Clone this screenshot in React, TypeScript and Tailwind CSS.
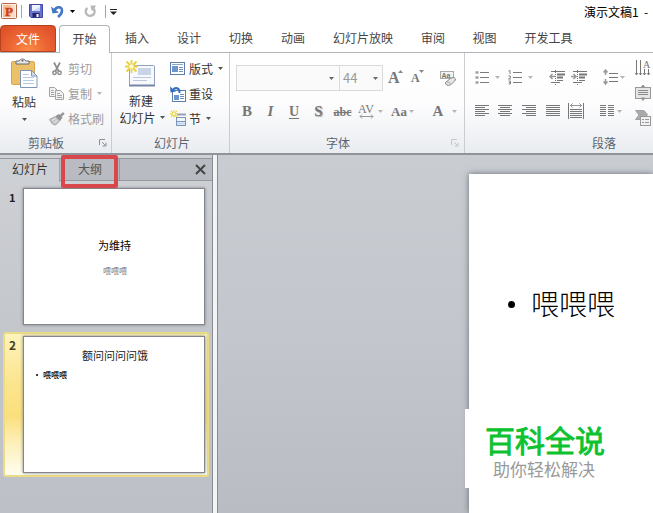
import React from 'react';

const tabs = [
  { name: '插入', width: 'w-[52px]' },
  { name: '设计', width: 'w-[52px]' },
  { name: '切换', width: 'w-[52px]' },
  { name: '动画', width: 'w-[52px]' },
  { name: '幻灯片放映', width: 'w-[88px]' },
  { name: '审阅', width: 'w-[52px]' },
  { name: '视图', width: 'w-[51px]' },
  { name: '开发工具', width: 'w-[77px]' },
];

function Arrow({ className = 'text-[#555]' }: { className?: string }) {
  return (
    <svg width="5" height="3" viewBox="0 0 5 3" className={`shrink-0 ${className}`}>
      <path d="M0 0H5L2.5 3Z" fill="currentColor" />
    </svg>
  );
}

function Launcher({ className = 'text-[#8a8f98]' }: { className?: string }) {
  return (
    <svg width="8" height="8" viewBox="0 0 8 8" fill="none" stroke="currentColor" className={className}>
      <path d="M0.5 6V0.5H6M3 3L6.5 6.5M7 3.5V7H3.5" />
    </svg>
  );
}

function Divider() {
  return <span className="w-px h-[16px] bg-[#c9ccd1] shrink-0"></span>;
}

function LogoIcon() {
  return (
    <svg width="16" height="16" viewBox="0 0 16 16">
      <rect x="0.5" y="0.5" width="15" height="15" rx="1" fill="#fdeee5" stroke="#b5654f" />
      <rect x="2" y="2" width="12" height="12" fill="#fbdcc6" />
      <path d="M2 2H9Q12.500 5 12 9L9 14H2Z" fill="#f6bd97" />
      <text x="4" y="13" fontSize="13" fontWeight="bold" fontFamily="Liberation Serif" fill="#c8401a" stroke="#c8401a" strokeWidth="0.4">P</text>
    </svg>
  );
}

function SaveIcon() {
  return (
    <svg width="14" height="14" viewBox="0 0 14 14">
      <path d="M0.500 0.500H13.500V13.500H2L0.500 12Z" fill="#6a72cc" stroke="#4147a4" />
      <rect x="3" y="1" width="8" height="6" fill="#eef3fd" />
      <path d="M3 7L11 3V7H3Z" fill="#c6d6f5" />
      <rect x="3.500" y="9" width="7" height="4.500" fill="#22286e" />
      <rect x="7.500" y="10" width="2" height="3" fill="#fff" />
    </svg>
  );
}

function UndoIcon() {
  return (
    <svg width="13" height="13" viewBox="0 0 13 13" fill="none">
      <path d="M3.500 5.500C5 1.500 11 1 11 5.500C11 8.500 9 10.500 7 12" stroke="#4577c4" strokeWidth="2.600" />
      <path d="M0 1.500L1.500 8.500L8 7.500Z" fill="#4577c4" />
    </svg>
  );
}

function RedoIcon() {
  return (
    <svg width="13" height="13" viewBox="0 0 13 13" fill="none">
      <path d="M3.500 3A4.400 4.400 0 1 0 9.800 4" stroke="#b8b8b8" strokeWidth="2.400" />
      <path d="M6.500 0.500H12L11 2.500L10 5.500H7.500Z" fill="#b8b8b8" />
    </svg>
  );
}

function PasteIcon() {
  return (
    <svg width="27" height="31" viewBox="0 0 27 31">
      <rect x="0.500" y="3.500" width="23" height="23" rx="1.500" fill="#ebc069" stroke="#d6a54e" />
      <path d="M5 6V3H8.500C8.500 0.500 14.500 0.500 14.500 3H18V6Z" fill="#e9e9ea" stroke="#66696e" />
      <circle cx="11.500" cy="2.800" r="1" fill="#66696e" />
      <path d="M9.500 12.500H20.500L26 18V29.500H9.500Z" fill="#fff" stroke="#7e95b8" />
      <path d="M20.500 12.500V18H26Z" fill="#d5e1f2" stroke="#7e95b8" />
      <path d="M12 16.500H18M12 19.500H23M12 22.500H23M12 25.500H23" stroke="#b9cbe4" />
    </svg>
  );
}

function CutIcon() {
  return (
    <svg width="10" height="14" viewBox="0 0 10 14" fill="none" stroke="#8d8d8d">
      <path d="M2 0.500L6.500 9M8 0.500L3.500 9" strokeWidth="1.700" />
      <circle cx="2.500" cy="10.800" r="1.700" strokeWidth="1.500" />
      <circle cx="7.500" cy="10.800" r="1.700" strokeWidth="1.500" />
    </svg>
  );
}

function CopyIcon() {
  return (
    <svg width="15" height="13" viewBox="0 0 15 13" fill="#f1f1f1" stroke="#a3a3a3">
      <path d="M0.500 0.500H5.500L8.500 3.500V9.500H0.500Z" />
      <path d="M6.500 3.500H11.500L14.500 6.500V12.500H6.500Z" />
      <path d="M2 3.500H4.500M2 5.500H5M2 7.500H5M8 6.500H11M8 8.500H13M8 10.500H13" />
    </svg>
  );
}

function BrushIcon() {
  return (
    <svg width="16" height="14" viewBox="0 0 16 14">
      <path d="M0.500 7.500L6.500 4.500L11 8.500L6.500 13L3.500 12Z" fill="#c4c4c4" stroke="#a3a3a3" />
      <path d="M6.500 4L10 2L13.500 5.500L11 9Z" fill="#929292" />
      <path d="M11.500 4L14.800 1" stroke="#999" strokeWidth="2.400" />
      <path d="M3 8.500L6.500 6.500M5 10.500L8.500 8.500" stroke="#eee" />
    </svg>
  );
}

function Spark({ s = 1 }: { s?: number }) {
  return (
    <g transform={`scale(${s})`}>
      <path d="M6.500 0V13M0 6.500H13M1.500 1.500L11.500 11.500M11.500 1.500L1.500 11.500" stroke="#ecd23a" strokeWidth="1.800" />
      <circle cx="6.500" cy="6.500" r="2.200" fill="#fffbd0" />
    </g>
  );
}

function NewSlideIcon() {
  return (
    <svg width="30" height="28" viewBox="0 0 30 28">
      <rect x="4.500" y="5.500" width="25" height="20" rx="1" fill="#f7f9fd" stroke="#93a1c0" />
      <path d="M4 25.500H30" stroke="#7485a8" strokeWidth="2" />
      <rect x="13" y="8" width="13" height="7" fill="#c9d4e8" />
      <path d="M8 17.500H26M8 20.500H22" stroke="#bcc7db" />
      <Spark />
    </svg>
  );
}

function LayoutIcon() {
  return (
    <svg width="15" height="13" viewBox="0 0 15 13">
      <rect x="0.500" y="0.500" width="14" height="12" fill="#fff" stroke="#5d7eac" />
      <path d="M2 2.500H13" stroke="#88a5cf" />
      <rect x="2" y="4" width="6" height="6" fill="#6d94cb" />
      <path d="M9 5.500H13M9 7.500H13M9 9.500H13" stroke="#6f8fbe" />
    </svg>
  );
}

function ResetIcon() {
  return (
    <svg width="16" height="16" viewBox="0 0 16 16">
      <rect x="2.500" y="4.500" width="13" height="11" fill="#fff" stroke="#5d7eac" />
      <rect x="4" y="9" width="5" height="5" fill="#6d94cb" />
      <path d="M10 8.500H14M10 10.500H14M10 12.500H14" stroke="#6f8fbe" />
      <path d="M3 4C5 1 10 1.500 9.500 7" fill="none" stroke="#356fbd" strokeWidth="2" />
      <path d="M0 0.500L0.500 6.500L6 5.500Z" fill="#356fbd" />
    </svg>
  );
}

function SectionIcon() {
  return (
    <svg width="17" height="17" viewBox="0 0 17 17">
      <path d="M7 4.500H16" stroke="#9aa2b0" strokeWidth="2" />
      <rect x="6.500" y="7.500" width="9" height="8" fill="#f3f7fc" stroke="#7c95bd" />
      <path d="M7 11.500H15" stroke="#7c95bd" />
      <path d="M7 13.500H15" stroke="#c4d4ec" strokeWidth="2" />
      <Spark s={0.6} />
    </svg>
  );
}

function EraserIcon() {
  return (
    <svg width="17" height="17" viewBox="0 0 17 17">
      <rect x="0.500" y="1.500" width="13" height="7" fill="#f3f3f3" stroke="#aaa" />
      <text x="1.500" y="8" fontSize="7" fontWeight="bold" fontFamily="Liberation Sans" fill="#777">Aa</text>
      <path d="M5.500 12.500L11 8Q15.500 6.500 15.500 10L10.500 15Q5.500 16.500 5.500 12.500Z" fill="#e6e6e6" stroke="#888" />
      <path d="M6.500 12Q10 11.500 10.500 14.500" fill="none" stroke="#aaa" />
    </svg>
  );
}

function ListIcon({ numbered = false }: { numbered?: boolean }) {
  return (
    <svg width="14" height="15" viewBox="0 0 14 15" fill="none" stroke="#7c7c7c">
      <path d="M5 2.500H14M5 7.500H14M5 12.500H14" />
      {numbered ? (
        <path d="M0.500 1L2 0.500V4M0.500 6H2.500V7.500L0.500 9H3M0.500 11H2.500V14H0.500M1 12.500H2.500" strokeWidth="0.900" />
      ) : (
        <path d="M0.500 2.500H3.500M0.500 7.500H3.500M0.500 12.500H3.500" stroke="#a0a0a0" strokeWidth="2.500" />
      )}
    </svg>
  );
}

function IndentIcon({ outdent = false }: { outdent?: boolean }) {
  return (
    <svg width="16" height="15" viewBox="0 0 16 15" fill="none" stroke="#777">
      <path d="M2 1.500H16M8 10.500H14M2 12.500H11" />
      <path d="M8 4.500H16M8 7.500H14" strokeWidth="2" />
      <path d="M6.500 0V15" strokeDasharray="1 1" />
      {outdent ? (
        <path d="M6 6.500H1M3.500 4L1 6.500L3.500 9" stroke="#999" strokeWidth="1.500" />
      ) : (
        <path d="M0 6.500H5M2.500 4L5 6.500L2.500 9" stroke="#999" strokeWidth="1.500" />
      )}
    </svg>
  );
}

function SpacingIcon() {
  return (
    <svg width="15" height="16" viewBox="0 0 15 16" fill="none" stroke="#777">
      <path d="M6 4.500H15M6 8.500H15M6 12.500H15" />
      <path d="M2.500 1V6M0.500 3.500L2.500 1L4.500 3.500M2.500 10V15M0.500 12.500L2.500 15L4.500 12.500" stroke="#999" strokeWidth="1.500" />
    </svg>
  );
}

function AlignIcon({ d }: { d: string }) {
  return (
    <svg width="15" height="12" viewBox="0 0 15 12" fill="none" stroke="#777">
      <path d={d} />
    </svg>
  );
}

function DistributeIcon() {
  return (
    <svg width="16" height="16" viewBox="0 0 16 16" fill="none" stroke="#777">
      <path d="M0.500 0V16M15.500 0V16M2 6.500H14M2 8.500H14M2 10.500H14M2 12.500H14M2 14.500H14" />
      <path d="M2 2.500H14M4.500 0.500L2.500 2.500L4.500 4.500M11.500 0.500L13.500 2.500L11.500 4.500" stroke="#999" />
    </svg>
  );
}

function TextDirectionIcon() {
  return (
    <svg width="16" height="16" viewBox="0 0 16 16" fill="none" stroke="#777">
      <path d="M1.500 0V15M5.500 0V15M9.500 9V15M13.500 9V15" />
      <path d="M0 13L1.500 15L3 13M4 13L5.500 15L7 13M8 13L9.500 15L11 13M12 13L13.500 15L15 13" strokeWidth="0.800" />
      <text x="8" y="8" fontSize="10" fontFamily="Liberation Serif" fill="#777" stroke="none">A</text>
    </svg>
  );
}

function AlignTextIcon() {
  return (
    <svg width="16" height="16" viewBox="0 0 16 16" fill="none" stroke="#999">
      <rect x="0.500" y="2.500" width="15" height="11" fill="#e6e6e6" />
      <path d="M3 5.500H13M3 7.500H13M3 9.500H13" stroke="#8c8c8c" />
      <path d="M6 2.500L8 0L10 2.500ZM6 13L8 15.500L10 13Z" fill="#888" />
    </svg>
  );
}

function SmartArtIcon() {
  return (
    <svg width="16" height="16" viewBox="0 0 16 16">
      <path d="M0.500 0.500H9L12.500 4.500L9 9.500H0.500L4 5Z" fill="#aaa" stroke="#a0a0a0" />
      <rect x="5.500" y="6.500" width="10" height="9" fill="#f0f0f0" stroke="#999" />
      <path d="M7 9.500H9M10 9.500H14M7 12.500H9M10 12.500H14" stroke="#999" />
    </svg>
  );
}

function Thumb({ children }: { children: React.ReactNode }) {
  return (
    <div className="w-[182px] h-[137px] bg-white border border-[#83878d] shadow-[0_0_3px_#7d8188] flex flex-col">
      {children}
    </div>
  );
}

function TitleBar() {
  return (
    <div className="h-[25px] flex items-start">
      <div className="flex items-center h-[22px] pl-px">
        <LogoIcon />
        <span className="w-px h-[13px] bg-[#a5a5a5] ml-[4px] mr-[7px]"></span>
        <SaveIcon />
        <span className="ml-[8px]"><UndoIcon /></span>
        <Arrow className="text-black ml-[6px]" />
        <span className="ml-[9px]"><RedoIcon /></span>
        <span className="w-px h-[13px] bg-[#a5a5a5] ml-[8px] mr-[4px]"></span>
        <svg width="7" height="6" viewBox="0 0 7 6" className="mt-[2px]">
          <path d="M0 0.500H7" stroke="#222" />
          <path d="M0 2.500H7L3.500 6Z" fill="#222" />
        </svg>
      </div>
      <div className="ml-auto w-[69px] text-[12px] leading-[24px] whitespace-pre text-black">演示文稿1  -</div>
    </div>
  );
}

function TabBar() {
  return (
    <div className="h-[28px] flex text-[12px] leading-[26px] text-[#444] border-b border-[#b0b3b7]">
      <div className="w-[56px] h-[27px] leading-[25px] rounded-t-[4px] border border-[#b6421d] bg-[radial-gradient(ellipse_at_bottom,#fb8b46_0%,#ec6534_50%,#dc4a26_100%)] text-white text-center">文件</div>
      <div className="w-[51px] h-[28px] ml-[3px] rounded-t-[4px] border border-b-0 border-[#b0b3b7] bg-white text-center leading-[25px]">开始</div>
      <div className="flex pl-px">
        {tabs.map((tab) => (
          <div key={tab.name} className={`${tab.width} text-center whitespace-nowrap`}>{tab.name}</div>
        ))}
      </div>
    </div>
  );
}

function ClipboardGroup() {
  return (
    <div className="w-[112px] border-r border-[#c9ccd1] flex flex-col">
      <div className="flex h-[80px] pt-[3px]">
        <div className="w-[48px] flex flex-col items-center text-[#333] pt-[2px]">
          <PasteIcon />
          <span className="leading-[16px] mt-[5px]">粘贴</span>
          <Arrow className="mt-[8px] text-[#555]" />
        </div>
        <div className="text-[#9b9b9b]">
          <div className="flex items-center h-[25px]">
            <span className="w-[20px] pl-[4px]"><CutIcon /></span>剪切
          </div>
          <div className="flex items-center h-[25px]">
            <span className="w-[20px] pl-px"><CopyIcon /></span>复制<Arrow className="text-[#b5b5b5] ml-[5px]" />
          </div>
          <div className="flex items-center h-[25px]">
            <span className="w-[20px] pl-px"><BrushIcon /></span>格式刷
          </div>
        </div>
      </div>
      <div className="flex items-center h-[21px] text-[#5c6470]">
        <span className="w-[71px] ml-[28px]">剪贴板</span>
        <Launcher />
      </div>
    </div>
  );
}

function SlidesGroup() {
  return (
    <div className="w-[118px] border-r border-[#c9ccd1] flex flex-col text-[#333]">
      <div className="flex h-[80px] pt-[3px]">
        <div className="w-[58px] flex flex-col items-center">
          <span className="mt-[4px] mr-[2px]"><NewSlideIcon /></span>
          <span className="leading-[17px] mt-[4px]">新建</span>
          <span className="leading-[17px] flex items-center whitespace-nowrap pl-[2px]">幻灯片<Arrow className="text-[#555] ml-[4px]" /></span>
        </div>
        <div>
          <div className="flex items-center h-[25px]">
            <span className="w-[19px]"><LayoutIcon /></span>版式<Arrow className="text-[#555] ml-[5px]" />
          </div>
          <div className="flex items-center h-[25px]">
            <span className="w-[19px]"><ResetIcon /></span>重设
          </div>
          <div className="flex items-center h-[25px]">
            <span className="w-[19px]"><SectionIcon /></span>节<Arrow className="text-[#555] ml-[5px]" />
          </div>
        </div>
      </div>
      <div className="h-[21px] leading-[21px] pl-[42px] text-[#5c6470]">幻灯片</div>
    </div>
  );
}

function FontGroup() {
  return (
    <div className="w-[235px] border-r border-[#c9ccd1] flex flex-col text-[#777]">
      <div className="flex items-center h-[26px] mt-[12px] pl-[6px]">
        <div className="w-[104px] h-[26px] border border-[#d8dadd] bg-[#fafafa] flex items-center justify-end pr-[5px]">
          <Arrow className="text-[#666]" />
        </div>
        <div className="w-[43px] h-[26px] border border-l-0 border-[#d8dadd] bg-[#fafafa] flex items-center justify-between pl-[3px] pr-[4px] text-[13px] text-[#999]">
          44<Arrow className="text-[#666]" />
        </div>
        <div className="w-[24px] pl-[5px] flex items-start font-['Liberation_Serif',serif] text-[16px] leading-[24px] font-bold">
          A
          <svg width="5" height="3" viewBox="0 0 5 3" className="shrink-0 mt-[4px] -ml-[2px]"><path d="M0 3L2.500 0L5 3Z" fill="#888" /></svg>
        </div>
        <div className="w-[20px] pl-[4px] flex items-start font-['Liberation_Serif',serif] text-[12px] leading-[24px] font-bold">
          A
          <Arrow className="text-[#888] mt-[4px] -ml-px" />
        </div>
        <span className="ml-[5px]"><Divider /></span>
        <span className="ml-[8px]"><EraserIcon /></span>
      </div>
      <div className="flex items-center h-[24px] mt-[9px] pl-[5px] font-['Liberation_Serif',serif] text-[15px]">
        <span className="w-[24px] text-center font-bold">B</span>
        <span className="w-[23px] text-center italic font-bold">I</span>
        <span className="w-[24px] text-center underline underline-offset-2 font-bold text-[14px]">U</span>
        <span className="w-[25px] text-center font-bold [text-shadow:1px_1px_1px_#aaa]">S</span>
        <span className="w-[23px] text-center line-through text-[12px] font-bold">abc</span>
        <span className="w-[24px] flex flex-col items-center text-[12px] leading-[10px]">
          AV
          <svg width="15" height="5" viewBox="0 0 15 5" fill="none" stroke="#999"><path d="M1 2.500H14M3 0.500L1 2.500L3 4.500M12 0.500L14 2.500L12 4.500" /></svg>
        </span>
        <Arrow className="text-[#b5b5b5]" />
        <span className="w-[18px] ml-[8px] font-bold text-[13px]">Aa</span>
        <Arrow className="text-[#b5b5b5]" />
        <span className="ml-[7px]"><Divider /></span>
        <span className="w-[24px] text-center ml-[5px] text-[15px] font-bold">A</span>
        <Arrow className="text-[#b5b5b5] ml-[2px]" />
      </div>
      <div className="flex items-center h-[21px] mt-[9px] text-[#5c6470]">
        <span className="w-[125px] ml-[96px]">字体</span>
        <Launcher className="text-[#c3c6ca]" />
      </div>
    </div>
  );
}

function ParagraphGroup() {
  return (
    <div className="flex-1 flex flex-col">
      <div className="flex h-[80px]">
        <div className="w-[170px] pl-[10px]">
          <div className="flex items-center h-[20px] mt-[14px]">
            <ListIcon />
            <Arrow className="text-[#b5b5b5] ml-[6px]" />
            <span className="ml-[8px]"><ListIcon numbered /></span>
            <Arrow className="text-[#b5b5b5] ml-[6px]" />
            <span className="ml-[8px]"><Divider /></span>
            <span className="ml-[8px]"><IndentIcon outdent /></span>
            <span className="ml-[6px]"><IndentIcon /></span>
            <span className="ml-[7px]"><Divider /></span>
            <span className="ml-[9px]"><SpacingIcon /></span>
            <Arrow className="text-[#b5b5b5] ml-[2px]" />
          </div>
          <div className="flex items-center h-[20px] mt-[14px]">
            <AlignIcon d="M0 0.500H14M0 2.500H10M0 4.500H14M0 6.500H10M0 8.500H14M0 10.500H10" />
            <span className="ml-[8px]"><AlignIcon d="M0 0.500H14M2 2.500H12M0 4.500H14M2 6.500H12M0 8.500H14M2 10.500H12" /></span>
            <span className="ml-[9px]"><AlignIcon d="M0 0.500H14M4 2.500H14M0 4.500H14M4 6.500H14M0 8.500H14M4 10.500H14" /></span>
            <span className="ml-[9px]"><AlignIcon d="M0 0.500H14M0 2.500H14M0 4.500H14M0 6.500H14M0 8.500H14M0 10.500H14" /></span>
            <span className="ml-[7px]"><DistributeIcon /></span>
            <span className="ml-[7px]"><Divider /></span>
            <span className="ml-[9px]"><AlignIcon d="M0 0.500H6M8 0.500H14M0 2.500H6M8 2.500H14M0 4.500H6M8 4.500H14M0 6.500H6M8 6.500H14M0 8.500H6M8 8.500H14M0 10.500H6M8 10.500H14" /></span>
            <Arrow className="text-[#b5b5b5] ml-[2px]" />
          </div>
        </div>
        <div className="flex flex-col gap-[9px] pt-[7px]">
          <TextDirectionIcon />
          <AlignTextIcon />
          <SmartArtIcon />
        </div>
      </div>
      <div className="h-[21px] leading-[21px] pl-[127px] text-[#5c6470]">段落</div>
    </div>
  );
}

function SlidePanel() {
  return (
    <aside className="relative w-[213px] shrink-0 border-r border-[#888c93] pt-[3px] text-[12px]">
      <div className="flex h-[23px] border-t border-b border-[#94989f] bg-[#b8bcc2] leading-[20px] text-[#333]">
        <div className="w-[60px] h-[23px] pl-[12px] bg-[#cdd0d5] border-r border-[#a0a4aa]">幻灯片</div>
        <div className="w-[60px] pl-[18px] border-r border-[#94989f] text-[#555]">大纲</div>
        <svg width="11" height="11" viewBox="0 0 11 11" className="ml-auto mr-[6px] mt-[5px]">
          <path d="M1 1L10 10M10 1L1 10" stroke="#444" strokeWidth="2" />
        </svg>
      </div>
      <div className="absolute left-[61px] top-0 w-[57px] h-[33px] border-4 border-[#d9474d] rounded-[2px]"></div>

      <div className="flex h-[137px] mt-[7px]">
        <span className="w-[23px] pl-[9px] pt-px text-[11px] font-bold text-[#222]">1</span>
        <Thumb>
          <p className="text-center text-[11px] leading-[16px] mt-[48px] pl-px text-black">为维持</p>
          <p className="text-center text-[8px] leading-[10px] mt-[13px] pl-[2px] text-[#777]">喂喂喂</p>
        </Thumb>
      </div>

      <div className="flex w-[206px] h-[145px] mt-[7px] ml-[3px] pt-[2px] rounded-[3px] border-2 border-[#ebdb85] bg-[linear-gradient(#fdf3bc_0%,#fbe58d_35%,#fbdf7c_58%,#fdf0bb_78%,#fffdf0_100%)]">
        <span className="w-[18px] pl-[4px] text-[12px] font-bold text-[#444022]">2</span>
        <Thumb>
          <p className="text-center text-[11px] leading-[16px] mt-[10px] pl-[2px] text-[#222]">额问问问问饿</p>
          <p className="flex items-center text-[8px] leading-[10px] mt-[7px] pl-[12px] text-black font-medium">
            <span className="w-[2px] h-[2px] bg-black rounded-full mr-[5px]"></span>喂喂喂
          </p>
        </Thumb>
      </div>
    </aside>
  );
}

function Editor() {
  return (
    <main className="flex-1 flex pl-[251px] pt-[19px] bg-[linear-gradient(#c9ccd1,#c3c6cc_50%,#b9bdc3)] border-l border-[#888c93]">
      <div className="relative flex-1 bg-white shadow-[0_0_6px_#666b73]">
        <p className="flex items-center pt-[109px] pl-[39px] text-[28px] leading-[40px] text-black font-light">
          <span className="w-[7px] h-[7px] rounded-full bg-black mr-[16px] mt-[2px]"></span>喂喂喂
        </p>
        <div className="absolute -left-[4px] top-[235px] w-[167px] h-[79px] bg-white pl-[20px] pt-[13px]">
          <div className="text-[30px] leading-[34px] text-[#0cc22f] whitespace-nowrap [-webkit-text-stroke:0.9px_#0cc22f]">百科全说</div>
          <div className="text-[17px] leading-[22px] mt-[2px] pl-[8px] text-[#999] whitespace-nowrap">助你轻松解决</div>
        </div>
      </div>
    </main>
  );
}

export default function App() {
  return (
    <div className="w-[653px] h-[513px] overflow-hidden flex flex-col bg-white font-['Noto_Sans_CJK_SC',sans-serif]">
      <TitleBar />
      <TabBar />
      <div className="h-[102px] flex text-[12px] bg-[linear-gradient(#fff_0%,#fdfdfe_50%,#e9ecf0_100%)] border-b-2 border-[#8f939a]">
        <ClipboardGroup />
        <SlidesGroup />
        <FontGroup />
        <ParagraphGroup />
      </div>
      <div className="flex-1 flex bg-[linear-gradient(#cfd1d5,#c3c6cb_50%,#bdc0c7)]">
        <SlidePanel />
        <div className="w-[4px] bg-[#f3f4f6]"></div>
        <Editor />
      </div>
    </div>
  );
}
